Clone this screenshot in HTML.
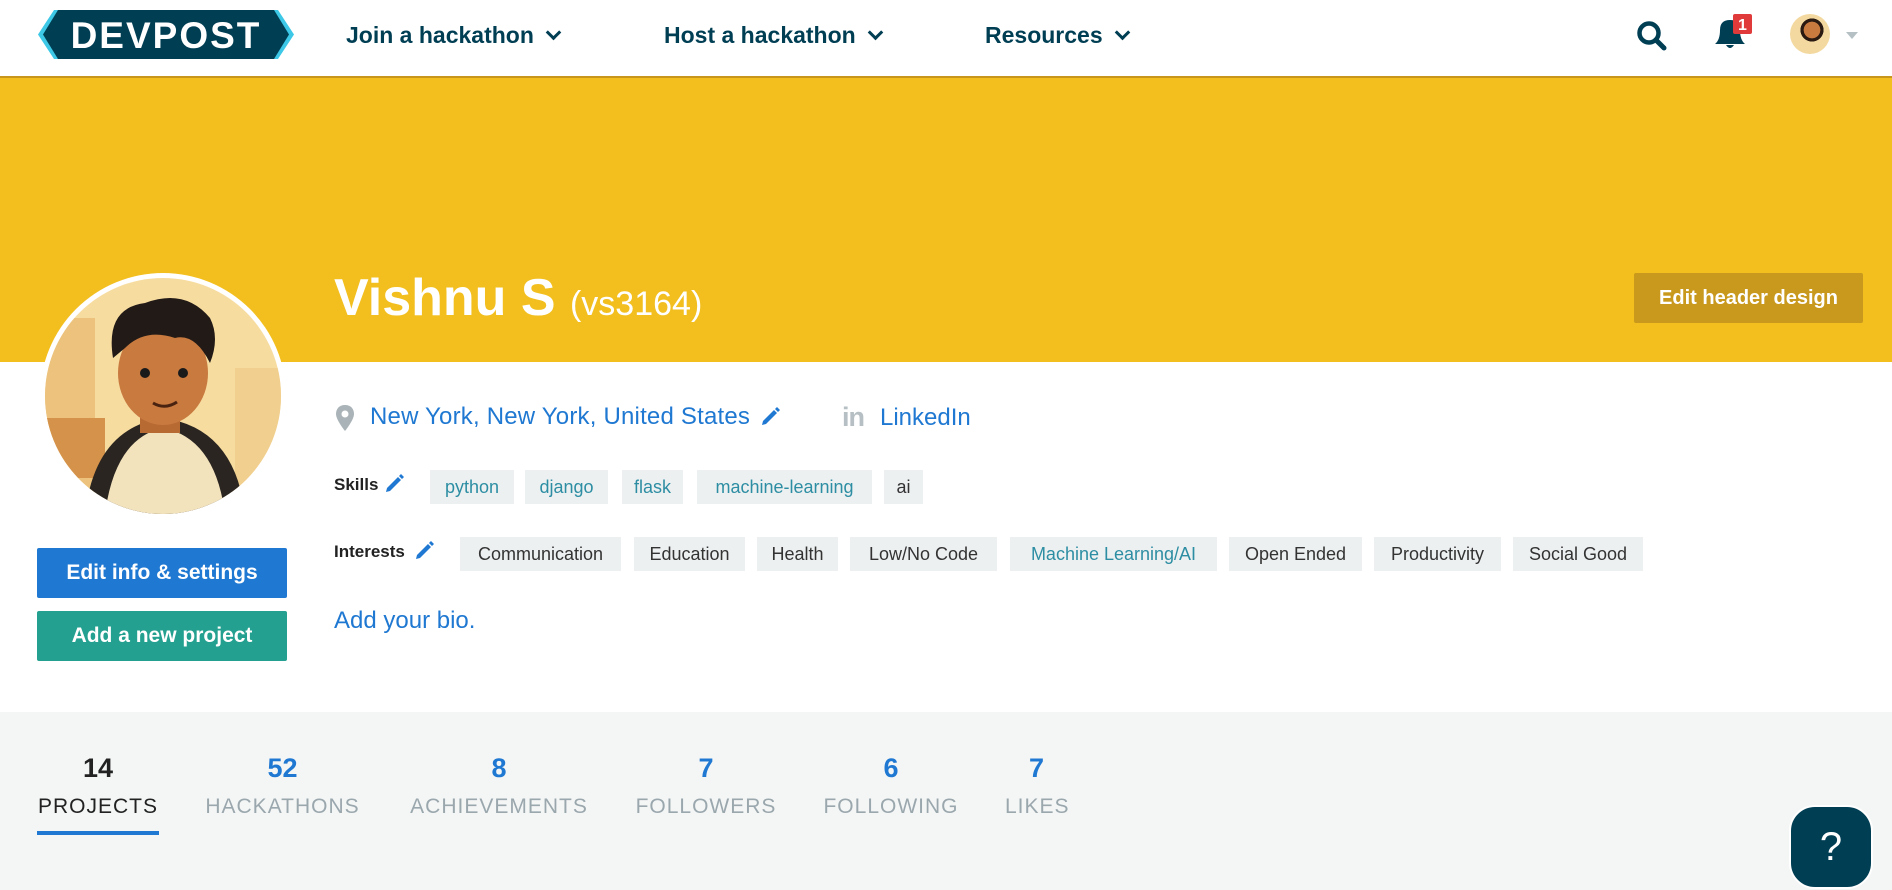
<!DOCTYPE html>
<html><head><meta charset="utf-8"><style>
*{box-sizing:border-box;margin:0;padding:0}
body{width:1892px;height:890px;overflow:hidden;background:#fff;font-family:"Liberation Sans",sans-serif;position:relative}
.a{position:absolute}
.nav{top:0;left:0;width:1892px;height:78px;background:#fff;border-bottom:2px solid #c8961a}
.ni{font-size:23px;font-weight:bold;color:#003e54;top:22px}
.ni:after{content:"";display:inline-block;width:8px;height:8px;border-right:3.5px solid #003e54;border-bottom:3.5px solid #003e54;transform:rotate(45deg);margin-left:14px;position:relative;top:-5px}
.ban{top:78px;left:0;width:1892px;height:284px;background:#f2bf1f}
.tag{height:34px;line-height:34px;background:#edf0f1;font-size:18px;text-align:center;color:#333}
.sk{color:#2d8ea3}
.lbl{font-size:17px;font-weight:bold;color:#222}
.btn{color:#fff;font-weight:bold;font-size:21px;text-align:center;border-radius:2px}
.stats{top:712px;left:0;width:1892px;height:178px;background:#f4f6f6}
.num{font-size:27px;font-weight:bold;color:#1f78d1;top:753px;text-align:center}
.lab{font-size:21px;color:#9aa7ad;top:795px;letter-spacing:1px;text-align:center}
</style></head><body>
<div class="a nav"></div>
<svg class="a" style="left:38px;top:10px" width="256" height="49" viewBox="0 0 256 49"><polygon points="16,0 240,0 256,24.5 240,49 16,49 0,24.5" fill="#3cc8e6"/><polygon points="20,0 236,0 251,24.5 236,49 20,49 5,24.5" fill="#003e54"/><text x="128" y="38" text-anchor="middle" font-family="Liberation Sans" font-weight="bold" font-size="37" fill="#fff" letter-spacing="2">DEVPOST</text></svg>
<div class="a ni" style="left:346px">Join a hackathon</div>
<div class="a ni" style="left:664px">Host a hackathon</div>
<div class="a ni" style="left:985px">Resources</div>
<svg class="a" style="left:1636px;top:20px" width="32" height="32" viewBox="0 0 32 32"><circle cx="13" cy="13" r="9.5" fill="none" stroke="#003e54" stroke-width="4.5"/><line x1="20" y1="20" x2="28" y2="28" stroke="#003e54" stroke-width="5" stroke-linecap="round"/></svg>
<svg class="a" style="left:1712px;top:14px" width="40" height="38" viewBox="0 0 40 38"><path d="M3 30 Q8 26 8 16 Q8 6 18 6 Q28 6 28 16 Q28 26 33 30 Z" fill="#003e54"/><path d="M14 31 Q18 37 22 31Z" fill="#003e54"/><rect x="21" y="0" width="19" height="20" rx="2" fill="#e03a3a"/><text x="30.5" y="16" text-anchor="middle" font-family="Liberation Sans" font-weight="bold" font-size="16" fill="#fff">1</text></svg>
<div class="a" style="left:1790px;top:14px;width:40px;height:40px;border-radius:50%;background:radial-gradient(circle at 55% 40%,#c97a3e 0 25%,#2a1a12 26% 35%,#f3d9a0 36%)"></div>
<div class="a" style="left:1846px;top:32px;width:0;height:0;border-left:6px solid transparent;border-right:6px solid transparent;border-top:7px solid #b5c0c5"></div>
<div class="a ban"></div>
<div class="a" style="left:334px;top:268px;color:#fff;font-size:52px;font-weight:bold;white-space:nowrap">Vishnu S <span style="font-size:34px;font-weight:normal">(vs3164)</span></div>
<div class="a btn" style="left:1634px;top:273px;width:229px;height:50px;line-height:50px;background:#c8991c;font-size:20px">Edit header design</div>
<div class="a" style="left:40px;top:273px;width:246px;height:246px;border-radius:50%;background:#fff"></div>
<svg class="a" style="left:45px;top:278px" width="236" height="236" viewBox="0 0 236 236"><defs><clipPath id="c"><circle cx="118" cy="118" r="118"/></clipPath></defs><g clip-path="url(#c)"><rect width="236" height="236" fill="#f7dca0"/><rect x="0" y="40" width="50" height="200" fill="#ecc27c"/><rect x="0" y="140" width="60" height="60" fill="#d4924a"/><rect x="190" y="90" width="46" height="150" fill="#f1cf8e"/><path d="M40 236 Q50 150 118 140 Q190 150 200 236Z" fill="#2a2520"/><path d="M60 236 Q70 160 118 150 Q170 160 180 236Z" fill="#f3e3bd"/><rect x="95" y="120" width="40" height="35" fill="#b86a33"/><ellipse cx="118" cy="95" rx="45" ry="52" fill="#c87a3f"/><path d="M68 80 Q60 30 100 25 Q140 10 165 40 Q175 60 165 85 Q150 55 130 60 Q100 50 80 70Z" fill="#221a16"/><circle cx="100" cy="95" r="5" fill="#1a1a1a"/><circle cx="138" cy="95" r="5" fill="#1a1a1a"/><path d="M108 125 Q120 132 132 124" stroke="#4a2210" stroke-width="3" fill="none"/></g></svg>
<svg class="a" style="left:336px;top:405px" width="18" height="26" viewBox="0 0 18 26"><path d="M9 0 C3 0 0 4 0 9 C0 15 9 26 9 26 C9 26 18 15 18 9 C18 4 15 0 9 0Z" fill="#aab4b8"/><circle cx="9" cy="9" r="3.5" fill="#fff"/></svg>
<div class="a" style="left:370px;top:403px;font-size:24px;color:#1f78d1;letter-spacing:0.2px">New York, New York, United States</div>
<svg class="a" style="left:761px;top:406px" width="20" height="20" viewBox="0 0 20 20"><path d="M2 15 L13 4 L16 7 L5 18 L1 19Z M14 3 L16 1 L19 4 L17 6Z" fill="#1f78d1"/></svg>
<div class="a" style="left:842px;top:402px;font-size:27px;font-weight:bold;color:#b5bfc4;letter-spacing:-1px">in</div>
<div class="a" style="left:880px;top:404px;font-size:24px;color:#1f78d1">LinkedIn</div>
<div class="a lbl" style="left:334px;top:475px">Skills</div>
<svg class="a" style="left:385px;top:473px" width="20" height="20" viewBox="0 0 20 20"><path d="M2 15 L13 4 L16 7 L5 18 L1 19Z M14 3 L16 1 L19 4 L17 6Z" fill="#1f78d1"/></svg>
<div class="a tag sk" style="left:430px;top:470px;width:84px">python</div>
<div class="a tag sk" style="left:525px;top:470px;width:83px">django</div>
<div class="a tag sk" style="left:622px;top:470px;width:61px">flask</div>
<div class="a tag sk" style="left:697px;top:470px;width:175px">machine-learning</div>
<div class="a tag" style="left:884px;top:470px;width:39px">ai</div>
<div class="a lbl" style="left:334px;top:542px">Interests</div>
<svg class="a" style="left:415px;top:540px" width="20" height="20" viewBox="0 0 20 20"><path d="M2 15 L13 4 L16 7 L5 18 L1 19Z M14 3 L16 1 L19 4 L17 6Z" fill="#1f78d1"/></svg>
<div class="a tag" style="left:460px;top:537px;width:161px">Communication</div>
<div class="a tag" style="left:634px;top:537px;width:111px">Education</div>
<div class="a tag" style="left:757px;top:537px;width:81px">Health</div>
<div class="a tag" style="left:850px;top:537px;width:147px">Low/No Code</div>
<div class="a tag sk" style="left:1010px;top:537px;width:207px">Machine Learning/AI</div>
<div class="a tag" style="left:1229px;top:537px;width:133px">Open Ended</div>
<div class="a tag" style="left:1374px;top:537px;width:127px">Productivity</div>
<div class="a tag" style="left:1513px;top:537px;width:130px">Social Good</div>
<div class="a" style="left:334px;top:607px;font-size:24px;color:#1f78d1">Add your bio.</div>
<div class="a btn" style="left:37px;top:548px;width:250px;height:50px;line-height:50px;background:#1f78d1">Edit info &amp; settings</div>
<div class="a btn" style="left:37px;top:611px;width:250px;height:50px;line-height:50px;background:#23a08f">Add a new project</div>
<div class="a stats"></div>
<div class="a num" style="left:37px;width:122px;color:#222">14</div>
<div class="a lab" style="left:37px;width:122px;color:#222">PROJECTS</div>
<div class="a" style="left:37px;top:831px;width:122px;height:4px;background:#1f78d1"></div>
<div class="a num" style="left:201px;width:163px">52</div>
<div class="a lab" style="left:201px;width:163px">HACKATHONS</div>
<div class="a num" style="left:407px;width:184px">8</div>
<div class="a lab" style="left:407px;width:184px">ACHIEVEMENTS</div>
<div class="a num" style="left:635px;width:142px">7</div>
<div class="a lab" style="left:635px;width:142px">FOLLOWERS</div>
<div class="a num" style="left:820px;width:142px">6</div>
<div class="a lab" style="left:820px;width:142px">FOLLOWING</div>
<div class="a num" style="left:1005px;width:63px">7</div>
<div class="a lab" style="left:1005px;width:63px">LIKES</div>
<div class="a" style="left:1789px;top:805px;width:84px;height:84px;border-radius:26px;background:#003e54;border:2px solid #fff;color:#fff;font-size:40px;text-align:center;line-height:80px">?</div>
</body></html>
